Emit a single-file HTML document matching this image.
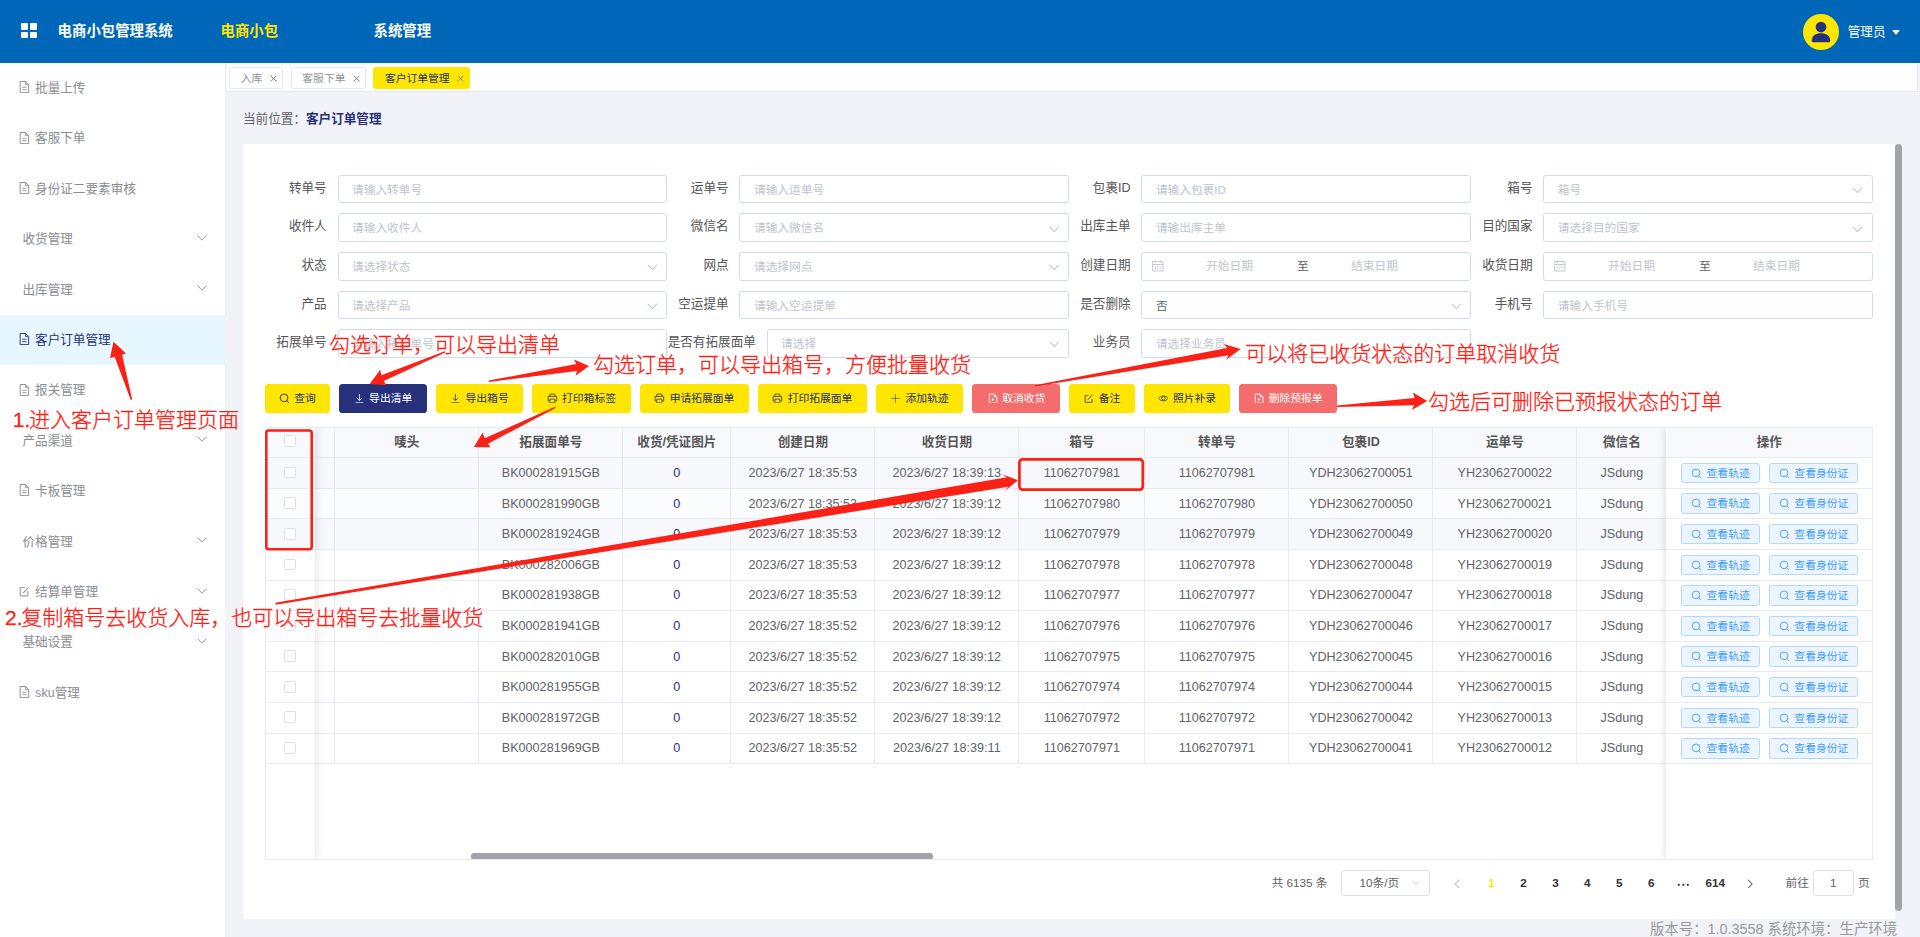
<!DOCTYPE html>
<html lang="zh-CN">
<head>
<meta charset="utf-8">
<title>电商小包管理系统</title>
<style>
*{box-sizing:border-box;margin:0;padding:0}
html,body{width:1920px;height:937px;overflow:hidden;background:#f2f3f8}
body{font-family:"Liberation Sans","Noto Sans CJK SC",sans-serif;position:relative}
#app{zoom:.9;position:absolute;left:0;top:0;width:2133.34px;height:1041.2px;overflow:hidden;background:#f2f3f8;color:#606266;font-size:14px}
/* header */
#hd{position:absolute;left:0;top:0;width:100%;height:70px;background:#0067b8;color:#fff}
#hd .grid{position:absolute;left:23px;top:26px;width:18px;height:17px}
#hd .grid i{position:absolute;width:8px;height:7px;background:#fff;border-radius:1px}
#hd .title{position:absolute;left:64px;top:0;line-height:70px;font-size:16px;font-weight:700;white-space:nowrap}
#hd .nav{position:absolute;left:192px;top:0;height:70px;display:flex}
#hd .nav div{width:170px;text-align:center;line-height:70px;font-size:16px;font-weight:700}
#hd .nav .on{color:#ffe600}
#hd .ava{position:absolute;left:2003px;top:15px;width:40px;height:40px;border-radius:50%;background:#ffe600;overflow:hidden}
#hd .user{position:absolute;left:2053px;top:0;line-height:72.4px;font-size:14px;white-space:nowrap}
#hd .caret{position:absolute;left:2102px;top:33px;width:0;height:0;border-left:5px solid transparent;border-right:5px solid transparent;border-top:6px solid #fff}
/* sidebar */
#sb{position:absolute;left:0;top:70px;width:250px;bottom:0;background:#fff}
#sb .mi{position:relative;height:56px;line-height:57px;padding-left:21px;font-size:14px;color:#8a8d93;white-space:nowrap}
#sb .mi.sub{padding-left:25px}
#sb .mi .di{display:inline-block;width:12px;height:13.5px;vertical-align:-1.5px;margin-right:6px}
#sb .mi .ar{position:absolute;right:19.8px;top:23px;width:11px;height:7px}
#sb .mi.on{background:#e6f7ff;color:#27307a}
/* tabs */
#tabs{position:absolute;left:250px;top:70px;right:2.5px;height:32px;border-right:1px solid #e4e7ed;border-left:1px solid #e4e7ed;background:#fff;border-bottom:1px solid #e4e7ed}
#tabs .tb{position:absolute;top:4.5px;height:24.5px;line-height:23.5px;border:1px solid #e4e7ed;border-radius:3px;font-size:12px;color:#909399;padding:0 0 0 12px;white-space:nowrap;background:#fff}
#tabs .tb .x{display:inline-block;margin-left:8px;width:8px;height:8px;color:#606266;vertical-align:-0.5px}
#tabs .tb.on{background:#ffe600;border-color:#ffe600;color:#27307a}
#tabs .tb.on .x{color:#7a7340}
/* content */
#bc{position:absolute;left:270px;top:122.3px;font-size:14px;line-height:22px;color:#606266;white-space:nowrap}
#bc b{color:#27307a;margin-left:0}
#card{position:absolute;left:270px;top:160px;width:1835.5px;height:861.5px;background:#fff}
#vs{position:absolute;left:2106px;top:160px;width:7.5px;height:852px;border-radius:4px;background:#a3a3aa}
#ft{position:absolute;right:25.5px;top:1022px;line-height:22px;font-size:16px;color:#999;white-space:nowrap}
/* form */
.fi{position:absolute;height:32px}
.fi label{position:absolute;right:100%;top:0;line-height:30px;padding-right:12px;font-size:14px;color:#555;white-space:nowrap}
.fi .in{position:absolute;left:0;top:0;width:100%;height:31px;border:1px solid #d3daee;border-radius:3px;background:#fff;font-size:13px;color:#c0c4cc;line-height:31px;padding-left:15px;white-space:nowrap;overflow:hidden}
.fi .in.v{color:#606266}
.fi .dn{position:absolute;right:10.5px;top:13.5px;width:12px;height:7.6px}
.fi .cal{position:absolute;left:12px;top:9px;width:13px;height:13px}
.fi .d1,.fi .d2,.fi .dz{position:absolute;top:0;line-height:31px;font-size:13px;color:#c0c4cc}
.fi .dz{color:#606266}
/* buttons */
.bt{position:absolute;top:266.5px;height:32px;border-radius:4px;background:#ffe600;color:#27307a;font-size:12px;line-height:32px;white-space:nowrap;text-align:center}
.bt.nv{background:#27307a;color:#fff}
.bt.rd{background:#f56c6c;color:#fff}
.bt svg{width:12px;height:12px;vertical-align:-1.5px;margin-right:5px}
/* table */
#tw{position:absolute;left:24.5px;top:314px;width:1787px;height:482px;border:1px solid #e8eaf3;overflow:hidden;background:#fff}
#tw table{position:absolute;left:0;top:0;border-collapse:separate;border-spacing:0;table-layout:fixed;width:1786px}
#tw th,#tw td{height:34px;border-right:1px solid #e8eaf3;border-bottom:1px solid #e8eaf3;text-align:center;font-size:14px;color:#606266;white-space:nowrap;overflow:hidden;padding:0}
#tw th{background:#f7f9fc;color:#555;font-weight:700;padding-bottom:4.8px}
#tw td.lnk{color:#27307a}
#tw tr.t1 td,#tw tr.t3 td{background:#f7f8fb}
#tw tr.t2 td{background:#fbfcfd}
#fixl{position:absolute;left:0;top:0;width:54.3px;height:480px;background:#fff;box-shadow:2px 0 8px rgba(0,0,0,.10)}
#fixr{position:absolute;right:0;top:0;width:229px;height:480px;background:#fff;box-shadow:-2px 0 8px rgba(0,0,0,.10)}
#fixl .fh,#fixr .fh{height:34px;background:#f7f9fc;border-bottom:1px solid #e8eaf3;text-align:center;line-height:33px;font-weight:700;color:#555;font-size:14px;position:relative}
.frow{height:34px;border-bottom:1px solid #e8eaf3;position:relative;white-space:nowrap}
#fixl .frow.t1,#fixl .frow.t3{background:#f7f8fb}
#fixl .frow.t2{background:#fbfcfd}
.cb{position:absolute;left:20.5px;top:9.5px;width:13px;height:13px;border:1px solid #dcdfe6;border-radius:2px;background:#fff}
.ob{position:absolute;top:5.2px;height:22.6px;border:1px solid #b3d8ff;background:#ecf5ff;color:#409eff;border-radius:3px;font-size:12px;line-height:20.6px;padding:0;text-align:center;white-space:nowrap}
.ob:nth-child(1){left:16px;width:88.6px}
.ob:nth-child(2){left:114px;width:99.6px}
.ob svg{width:12px;height:12px;vertical-align:-2px;margin-right:5px}
#hs{position:absolute;left:228px;top:473px;width:513px;height:7.5px;border-radius:3.5px;background:#a3a3aa}
/* pagination */
#pg{position:absolute;left:0;top:807.2px;width:100%;height:28px;font-size:13px;color:#606266;line-height:28px;white-space:nowrap}
#pg span{position:absolute;top:0}
#pg .num{font-weight:700;color:#303133;width:35.5px;text-align:center}
#pg .num.on{color:#ffe600}
#pg .sel{height:28px;width:99px;border:1px solid #dcdfe6;border-radius:3px;line-height:26px;padding-left:19px;color:#606266}
#pg .jmp{height:28px;width:46px;border:1px solid #dcdfe6;border-radius:3px;line-height:26px;text-align:center;color:#606266}
/* overlay */
#ov{position:absolute;left:0;top:0;width:1920px;height:937px;pointer-events:none}
#ov text{font-family:"Liberation Sans","Noto Sans CJK SC",sans-serif;font-size:21px;fill:#fc2116;font-weight:300;stroke:#fc2116;stroke-width:.28px}
#btns{position:absolute;left:0;top:266.8px}
#btns .bt{position:absolute;top:0}

#fixl .fh .cb{top:8.5px}

#tw td.c0,#tw th:first-child{border-right:none}

</style>
</head>
<body>
<div id="app">
  <div id="hd">
    <div class="grid"><i style="left:0;top:0"></i><i style="left:10.3px;top:0"></i><i style="left:0;top:9.7px"></i><i style="left:10.3px;top:9.7px"></i></div>
    <div class="title">电商小包管理系统</div>
    <div class="nav"><div class="on">电商小包</div><div>系统管理</div></div>
    <div class="ava"><svg viewBox="0 0 40 40" width="40" height="40"><circle cx="20" cy="14.5" r="6" fill="#27307a"/><path d="M11 31.3 Q9.6 31.3 9.7 29.5 C10 23.5 14 21.3 20 21.3 C26 21.3 30 23.5 30.3 29.5 Q30.4 31.3 29 31.3 Z" fill="#27307a"/></svg></div>
    <div class="user">管理员</div>
    <div class="caret"></div>
  </div>
  <div id="sb">
    <div class="mi"><svg class="di" viewBox="0 0 11 14"><path d="M0.6 0.6 H7 L10.4 4 V13.4 H0.6 Z" fill="none" stroke="currentColor" stroke-width="1.1" stroke-linejoin="round"/><path d="M6.8 0.8 V4.2 H10.2" fill="none" stroke="currentColor" stroke-width="1"/><path d="M3 7.2 H8 M3 10 H8" stroke="currentColor" stroke-width="1"/></svg>批量上传</div>
    <div class="mi"><svg class="di" viewBox="0 0 11 14"><path d="M0.6 0.6 H7 L10.4 4 V13.4 H0.6 Z" fill="none" stroke="currentColor" stroke-width="1.1" stroke-linejoin="round"/><path d="M6.8 0.8 V4.2 H10.2" fill="none" stroke="currentColor" stroke-width="1"/><path d="M3 7.2 H8 M3 10 H8" stroke="currentColor" stroke-width="1"/></svg>客服下单</div>
    <div class="mi"><svg class="di" viewBox="0 0 11 14"><path d="M0.6 0.6 H7 L10.4 4 V13.4 H0.6 Z" fill="none" stroke="currentColor" stroke-width="1.1" stroke-linejoin="round"/><path d="M6.8 0.8 V4.2 H10.2" fill="none" stroke="currentColor" stroke-width="1"/><path d="M3 7.2 H8 M3 10 H8" stroke="currentColor" stroke-width="1"/></svg>身份证二要素审核</div>
    <div class="mi sub">收货管理<svg class="ar" viewBox="0 0 11 7"><path d="M0.8 0.8 L5.5 5.7 L10.2 0.8" fill="none" stroke="#959bb0" stroke-width="1.1"/></svg></div>
    <div class="mi sub">出库管理<svg class="ar" viewBox="0 0 11 7"><path d="M0.8 0.8 L5.5 5.7 L10.2 0.8" fill="none" stroke="#959bb0" stroke-width="1.1"/></svg></div>
    <div class="mi on"><svg class="di" viewBox="0 0 11 14"><path d="M0.6 0.6 H7 L10.4 4 V13.4 H0.6 Z" fill="none" stroke="currentColor" stroke-width="1.1" stroke-linejoin="round"/><path d="M6.8 0.8 V4.2 H10.2" fill="none" stroke="currentColor" stroke-width="1"/><path d="M3 7.2 H8 M3 10 H8" stroke="currentColor" stroke-width="1"/></svg>客户订单管理</div>
    <div class="mi"><svg class="di" viewBox="0 0 11 14"><path d="M0.6 0.6 H7 L10.4 4 V13.4 H0.6 Z" fill="none" stroke="currentColor" stroke-width="1.1" stroke-linejoin="round"/><path d="M6.8 0.8 V4.2 H10.2" fill="none" stroke="currentColor" stroke-width="1"/><path d="M3 7.2 H8 M3 10 H8" stroke="currentColor" stroke-width="1"/></svg>报关管理</div>
    <div class="mi sub">产品渠道<svg class="ar" viewBox="0 0 11 7"><path d="M0.8 0.8 L5.5 5.7 L10.2 0.8" fill="none" stroke="#959bb0" stroke-width="1.1"/></svg></div>
    <div class="mi"><svg class="di" viewBox="0 0 11 14"><path d="M0.6 0.6 H7 L10.4 4 V13.4 H0.6 Z" fill="none" stroke="currentColor" stroke-width="1.1" stroke-linejoin="round"/><path d="M6.8 0.8 V4.2 H10.2" fill="none" stroke="currentColor" stroke-width="1"/><path d="M3 7.2 H8 M3 10 H8" stroke="currentColor" stroke-width="1"/></svg>卡板管理</div>
    <div class="mi sub">价格管理<svg class="ar" viewBox="0 0 11 7"><path d="M0.8 0.8 L5.5 5.7 L10.2 0.8" fill="none" stroke="#959bb0" stroke-width="1.1"/></svg></div>
    <div class="mi"><svg class="di" viewBox="0 0 11 14"><path d="M9.5 7 V12.6 H0.6 V3 H6" fill="none" stroke="currentColor" stroke-width="1.1"/><path d="M4 9.4 L10.2 2.6" stroke="currentColor" stroke-width="1.2"/></svg>结算单管理<svg class="ar" viewBox="0 0 11 7"><path d="M0.8 0.8 L5.5 5.7 L10.2 0.8" fill="none" stroke="#959bb0" stroke-width="1.1"/></svg></div>
    <div class="mi sub">基础设置<svg class="ar" viewBox="0 0 11 7"><path d="M0.8 0.8 L5.5 5.7 L10.2 0.8" fill="none" stroke="#959bb0" stroke-width="1.1"/></svg></div>
    <div class="mi"><svg class="di" viewBox="0 0 11 14"><path d="M0.6 0.6 H7 L10.4 4 V13.4 H0.6 Z" fill="none" stroke="currentColor" stroke-width="1.1" stroke-linejoin="round"/><path d="M6.8 0.8 V4.2 H10.2" fill="none" stroke="currentColor" stroke-width="1"/><path d="M3 7.2 H8 M3 10 H8" stroke="currentColor" stroke-width="1"/></svg>sku管理</div>
  </div>
  <div id="tabs">
    <div class="tb" style="left:3.3px;width:59.5px">入库<svg class="x" viewBox="0 0 8 8"><path d="M0.8 0.8 L7.2 7.2 M7.2 0.8 L0.8 7.2" stroke="currentColor" stroke-width="0.9" fill="none"/></svg></div>
    <div class="tb" style="left:71.7px;width:83.5px">客服下单<svg class="x" viewBox="0 0 8 8"><path d="M0.8 0.8 L7.2 7.2 M7.2 0.8 L0.8 7.2" stroke="currentColor" stroke-width="0.9" fill="none"/></svg></div>
    <div class="tb on" style="left:163.5px;width:108px">客户订单管理<svg class="x" viewBox="0 0 8 8"><path d="M0.8 0.8 L7.2 7.2 M7.2 0.8 L0.8 7.2" stroke="currentColor" stroke-width="0.9" fill="none"/></svg></div>
  </div>
  <div id="bc">当前位置：<b>客户订单管理</b></div>
  <div id="card">
    <!-- form row 1 -->
    <div class="fi" style="left:105px;top:34.2px;width:366px"><label>转单号</label><div class="in">请输入转单号</div></div>
    <div class="fi" style="left:551.6px;top:34.2px;width:366px"><label>运单号</label><div class="in">请输入运单号</div></div>
    <div class="fi" style="left:998.2px;top:34.2px;width:366px"><label>包裹ID</label><div class="in">请输入包裹ID</div></div>
    <div class="fi" style="left:1444.8px;top:34.2px;width:366px"><label>箱号</label><div class="in">箱号</div><svg class="dn" viewBox="0 0 11 7"><path d="M0.8 0.8 L5.5 5.7 L10.2 0.8" fill="none" stroke="#c0c4cc" stroke-width="1.1"/></svg></div>
    <!-- row 2 -->
    <div class="fi" style="left:105px;top:77.1px;width:366px"><label>收件人</label><div style="height:32px" class="in">请输入收件人</div></div>
    <div class="fi" style="left:551.6px;top:77.1px;width:366px"><label>微信名</label><div style="height:32px" class="in">请输入微信名</div><svg class="dn" viewBox="0 0 11 7"><path d="M0.8 0.8 L5.5 5.7 L10.2 0.8" fill="none" stroke="#c0c4cc" stroke-width="1.1"/></svg></div>
    <div class="fi" style="left:998.2px;top:77.1px;width:366px"><label>出库主单</label><div style="height:32px" class="in">请输出库主单</div></div>
    <div class="fi" style="left:1444.8px;top:77.1px;width:366px"><label>目的国家</label><div style="height:32px" class="in">请选择目的国家</div><svg class="dn" viewBox="0 0 11 7"><path d="M0.8 0.8 L5.5 5.7 L10.2 0.8" fill="none" stroke="#c0c4cc" stroke-width="1.1"/></svg></div>
    <!-- row 3 -->
    <div class="fi" style="left:105px;top:120px;width:366px"><label>状态</label><div style="height:32px" class="in">请选择状态</div><svg class="dn" viewBox="0 0 11 7"><path d="M0.8 0.8 L5.5 5.7 L10.2 0.8" fill="none" stroke="#c0c4cc" stroke-width="1.1"/></svg></div>
    <div class="fi" style="left:551.6px;top:120px;width:366px"><label>网点</label><div style="height:32px" class="in">请选择网点</div><svg class="dn" viewBox="0 0 11 7"><path d="M0.8 0.8 L5.5 5.7 L10.2 0.8" fill="none" stroke="#c0c4cc" stroke-width="1.1"/></svg></div>
    <div class="fi" style="left:998.2px;top:120px;width:366px"><label>创建日期</label><div style="height:32px" class="in"></div><svg class="cal" viewBox="0 0 13 13"><rect x="0.8" y="1.8" width="11.4" height="10.4" fill="none" stroke="#c0c4cc" stroke-width="1"/><path d="M0.8 5 H12.2 M3.6 0.5 V3 M9.4 0.5 V3 M3 7.5 H4.5 M5.8 7.5 H7.3 M8.6 7.5 H10 M3 9.8 H4.5 M5.8 9.8 H7.3 M8.6 9.8 H10" stroke="#c0c4cc" stroke-width="1" fill="none"/></svg><span class="d1" style="left:72px">开始日期</span><span class="dz" style="left:173px">至</span><span class="d2" style="left:233px">结束日期</span></div>
    <div class="fi" style="left:1444.8px;top:120px;width:366px"><label>收货日期</label><div style="height:32px" class="in"></div><svg class="cal" viewBox="0 0 13 13"><rect x="0.8" y="1.8" width="11.4" height="10.4" fill="none" stroke="#c0c4cc" stroke-width="1"/><path d="M0.8 5 H12.2 M3.6 0.5 V3 M9.4 0.5 V3 M3 7.5 H4.5 M5.8 7.5 H7.3 M8.6 7.5 H10 M3 9.8 H4.5 M5.8 9.8 H7.3 M8.6 9.8 H10" stroke="#c0c4cc" stroke-width="1" fill="none"/></svg><span class="d1" style="left:72px">开始日期</span><span class="dz" style="left:173px">至</span><span class="d2" style="left:233px">结束日期</span></div>
    <!-- row 4 -->
    <div class="fi" style="left:105px;top:162.9px;width:366px"><label>产品</label><div class="in">请选择产品</div><svg class="dn" viewBox="0 0 11 7"><path d="M0.8 0.8 L5.5 5.7 L10.2 0.8" fill="none" stroke="#c0c4cc" stroke-width="1.1"/></svg></div>
    <div class="fi" style="left:551.6px;top:162.9px;width:366px"><label>空运提单</label><div class="in">请输入空运提单</div></div>
    <div class="fi" style="left:998.2px;top:162.9px;width:366px"><label>是否删除</label><div class="in v">否</div><svg class="dn" viewBox="0 0 11 7"><path d="M0.8 0.8 L5.5 5.7 L10.2 0.8" fill="none" stroke="#c0c4cc" stroke-width="1.1"/></svg></div>
    <div class="fi" style="left:1444.8px;top:162.9px;width:366px"><label>手机号</label><div class="in">请输入手机号</div></div>
    <!-- row 5 -->
    <div class="fi" style="left:105px;top:205.8px;width:366px"><label>拓展单号</label><div style="height:32px" class="in">请输入拓展单号</div></div>
    <div class="fi" style="left:581.8px;top:205.8px;width:335.8px"><label>是否有拓展面单</label><div style="height:32px" class="in">请选择</div><svg class="dn" viewBox="0 0 11 7"><path d="M0.8 0.8 L5.5 5.7 L10.2 0.8" fill="none" stroke="#c0c4cc" stroke-width="1.1"/></svg></div>
    <div class="fi" style="left:998.2px;top:205.8px;width:366px"><label>业务员</label><div style="height:32px" class="in">请选择业务员</div></div>
    <!-- buttons -->
    <div id="btns">
      <span class="bt" style="left:24.4px;width:72.2px"><svg class="ic" viewBox="0 0 12 12"><circle cx="5.6" cy="5.4" r="4.3" fill="none" stroke="currentColor" stroke-width="1"/><path d="M8.7 8.6 L10.6 10.6" stroke="currentColor" stroke-width="1" fill="none" stroke-linecap="round"/></svg>查询</span>
      <span class="bt nv" style="left:106.7px;width:97.8px"><svg viewBox="0 0 12 12"><path d="M6 1 V8.2 M3 5.6 L6 8.4 L9 5.6 M1.5 10.8 H10.5" fill="none" stroke="currentColor" stroke-width="0.85"/></svg>导出清单</span>
      <span class="bt" style="left:214.4px;width:96.7px"><svg viewBox="0 0 12 12"><path d="M6 1 V8.2 M3 5.6 L6 8.4 L9 5.6 M1.5 10.8 H10.5" fill="none" stroke="currentColor" stroke-width="0.85"/></svg>导出箱号</span>
      <span class="bt" style="left:321.1px;width:109.7px"><svg viewBox="0 0 12 12"><path d="M3.2 3.8 V1.2 H8.8 V3.8 M3 8.8 H1.2 V3.8 H10.8 V8.8 H9 M3.2 6.8 H8.8 V11 H3.2 Z" fill="none" stroke="currentColor" stroke-width="0.85"/></svg>打印箱标签</span>
      <span class="bt" style="left:441.1px;width:120.8px"><svg viewBox="0 0 12 12"><path d="M3.2 3.8 V1.2 H8.8 V3.8 M3 8.8 H1.2 V3.8 H10.8 V8.8 H9 M3.2 6.8 H8.8 V11 H3.2 Z" fill="none" stroke="currentColor" stroke-width="0.85"/></svg>申请拓展面单</span>
      <span class="bt" style="left:572.2px;width:120.8px"><svg viewBox="0 0 12 12"><path d="M3.2 3.8 V1.2 H8.8 V3.8 M3 8.8 H1.2 V3.8 H10.8 V8.8 H9 M3.2 6.8 H8.8 V11 H3.2 Z" fill="none" stroke="currentColor" stroke-width="0.85"/></svg>打印拓展面单</span>
      <span class="bt" style="left:703.3px;width:96.3px"><svg viewBox="0 0 12 12"><path d="M6 1 V11 M1 6 H11" stroke="currentColor" stroke-width="0.8" fill="none" opacity=".75"/></svg>添加轨迹</span>
      <span class="bt rd" style="left:810px;width:98px"><svg viewBox="0 0 12 12"><path d="M2.6 1.2 H8 L11 4.2 V11.2 H2.6 Z" fill="none" stroke="currentColor" stroke-width="0.95"/><path d="M8 1.2 V4.2 H11" fill="none" stroke="currentColor" stroke-width="0.9"/><path d="M5.4 5.4 L8.2 7.3 L5.4 9.2 Z" fill="currentColor"/></svg>取消收货</span>
      <span class="bt" style="left:917.8px;width:73px"><svg viewBox="0 0 12 12"><path d="M10 6.6 V10.4 H2.4 V2.8 H6.2" fill="none" stroke="currentColor" stroke-width="0.85"/><path d="M5.4 7.4 L10.4 2" stroke="currentColor" stroke-width="0.95"/></svg>备注</span>
      <span class="bt" style="left:1001.1px;width:95.2px"><svg viewBox="0 0 12 12"><path d="M0.6 6 C3 2.4 9 2.4 11.4 6 C9 9.6 3 9.6 0.6 6 Z" fill="none" stroke="currentColor" stroke-width="0.8"/><circle cx="6" cy="6" r="2" fill="none" stroke="currentColor" stroke-width="0.8"/></svg>照片补录</span>
      <span class="bt rd" style="left:1106.7px;width:108.9px"><svg viewBox="0 0 12 12"><path d="M2.6 1.2 H8 L11 4.2 V11.2 H2.6 Z" fill="none" stroke="currentColor" stroke-width="0.95"/><path d="M8 1.2 V4.2 H11" fill="none" stroke="currentColor" stroke-width="0.9"/><path d="M5.4 5.4 L8.2 7.3 L5.4 9.2 Z" fill="currentColor"/></svg>删除预报单</span>
    </div>
    <!-- table -->
    <div id="tw">
      <table>
        <colgroup><col style="width:55px"><col style="width:22px"><col style="width:160px"><col style="width:160px"><col style="width:120px"><col style="width:160px"><col style="width:160px"><col style="width:140px"><col style="width:160px"><col style="width:160px"><col style="width:160px"><col style="width:100px"><col style="width:229px"></colgroup>
        <thead><tr><th></th><th></th><th>唛头</th><th>拓展面单号</th><th>收货/凭证图片</th><th>创建日期</th><th>收货日期</th><th>箱号</th><th>转单号</th><th>包裹ID</th><th>运单号</th><th>微信名</th><th>操作</th></tr></thead>
        <tbody>
<tr class="t1"><td class="c0"></td><td></td><td></td><td>BK000281915GB</td><td class="lnk">0</td><td>2023/6/27 18:35:53</td><td>2023/6/27 18:39:13</td><td>11062707981</td><td>11062707981</td><td>YDH23062700051</td><td>YH23062700022</td><td>JSdung</td><td class="op"></td></tr>
<tr class="t2"><td class="c0"></td><td></td><td></td><td>BK000281990GB</td><td class="lnk">0</td><td>2023/6/27 18:35:53</td><td>2023/6/27 18:39:12</td><td>11062707980</td><td>11062707980</td><td>YDH23062700050</td><td>YH23062700021</td><td>JSdung</td><td class="op"></td></tr>
<tr class="t3"><td class="c0"></td><td></td><td></td><td>BK000281924GB</td><td class="lnk">0</td><td>2023/6/27 18:35:53</td><td>2023/6/27 18:39:12</td><td>11062707979</td><td>11062707979</td><td>YDH23062700049</td><td>YH23062700020</td><td>JSdung</td><td class="op"></td></tr>
<tr><td class="c0"></td><td></td><td></td><td>BK000282006GB</td><td class="lnk">0</td><td>2023/6/27 18:35:53</td><td>2023/6/27 18:39:12</td><td>11062707978</td><td>11062707978</td><td>YDH23062700048</td><td>YH23062700019</td><td>JSdung</td><td class="op"></td></tr>
<tr><td class="c0"></td><td></td><td></td><td>BK000281938GB</td><td class="lnk">0</td><td>2023/6/27 18:35:53</td><td>2023/6/27 18:39:12</td><td>11062707977</td><td>11062707977</td><td>YDH23062700047</td><td>YH23062700018</td><td>JSdung</td><td class="op"></td></tr>
<tr><td class="c0"></td><td></td><td></td><td>BK000281941GB</td><td class="lnk">0</td><td>2023/6/27 18:35:52</td><td>2023/6/27 18:39:12</td><td>11062707976</td><td>11062707976</td><td>YDH23062700046</td><td>YH23062700017</td><td>JSdung</td><td class="op"></td></tr>
<tr><td class="c0"></td><td></td><td></td><td>BK000282010GB</td><td class="lnk">0</td><td>2023/6/27 18:35:52</td><td>2023/6/27 18:39:12</td><td>11062707975</td><td>11062707975</td><td>YDH23062700045</td><td>YH23062700016</td><td>JSdung</td><td class="op"></td></tr>
<tr><td class="c0"></td><td></td><td></td><td>BK000281955GB</td><td class="lnk">0</td><td>2023/6/27 18:35:52</td><td>2023/6/27 18:39:12</td><td>11062707974</td><td>11062707974</td><td>YDH23062700044</td><td>YH23062700015</td><td>JSdung</td><td class="op"></td></tr>
<tr><td class="c0"></td><td></td><td></td><td>BK000281972GB</td><td class="lnk">0</td><td>2023/6/27 18:35:52</td><td>2023/6/27 18:39:12</td><td>11062707972</td><td>11062707972</td><td>YDH23062700042</td><td>YH23062700013</td><td>JSdung</td><td class="op"></td></tr>
<tr><td class="c0"></td><td></td><td></td><td>BK000281969GB</td><td class="lnk">0</td><td>2023/6/27 18:35:52</td><td>2023/6/27 18:39:11</td><td>11062707971</td><td>11062707971</td><td>YDH23062700041</td><td>YH23062700012</td><td>JSdung</td><td class="op"></td></tr>
        </tbody>
      </table>
      <div id="fixl"><div class="fh"><span class="cb"></span></div>
<div class="frow t1"><span class="cb"></span></div>
<div class="frow t2"><span class="cb"></span></div>
<div class="frow t3"><span class="cb"></span></div>
<div class="frow"><span class="cb"></span></div>
<div class="frow"><span class="cb"></span></div>
<div class="frow"><span class="cb"></span></div>
<div class="frow"><span class="cb"></span></div>
<div class="frow"><span class="cb"></span></div>
<div class="frow"><span class="cb"></span></div>
<div class="frow"><span class="cb"></span></div>
      </div>
      <div id="fixr"><div class="fh">操作</div>
<div class="frow"><span class="ob"><svg class="ic" viewBox="0 0 12 12"><circle cx="5.6" cy="5.4" r="4.3" fill="none" stroke="currentColor" stroke-width="1"/><path d="M8.7 8.6 L10.6 10.6" stroke="currentColor" stroke-width="1" fill="none" stroke-linecap="round"/></svg><span>查看轨迹</span></span><span class="ob"><svg class="ic" viewBox="0 0 12 12"><circle cx="5.6" cy="5.4" r="4.3" fill="none" stroke="currentColor" stroke-width="1"/><path d="M8.7 8.6 L10.6 10.6" stroke="currentColor" stroke-width="1" fill="none" stroke-linecap="round"/></svg><span>查看身份证</span></span></div>
<div class="frow"><span class="ob"><svg class="ic" viewBox="0 0 12 12"><circle cx="5.6" cy="5.4" r="4.3" fill="none" stroke="currentColor" stroke-width="1"/><path d="M8.7 8.6 L10.6 10.6" stroke="currentColor" stroke-width="1" fill="none" stroke-linecap="round"/></svg><span>查看轨迹</span></span><span class="ob"><svg class="ic" viewBox="0 0 12 12"><circle cx="5.6" cy="5.4" r="4.3" fill="none" stroke="currentColor" stroke-width="1"/><path d="M8.7 8.6 L10.6 10.6" stroke="currentColor" stroke-width="1" fill="none" stroke-linecap="round"/></svg><span>查看身份证</span></span></div>
<div class="frow"><span class="ob"><svg class="ic" viewBox="0 0 12 12"><circle cx="5.6" cy="5.4" r="4.3" fill="none" stroke="currentColor" stroke-width="1"/><path d="M8.7 8.6 L10.6 10.6" stroke="currentColor" stroke-width="1" fill="none" stroke-linecap="round"/></svg><span>查看轨迹</span></span><span class="ob"><svg class="ic" viewBox="0 0 12 12"><circle cx="5.6" cy="5.4" r="4.3" fill="none" stroke="currentColor" stroke-width="1"/><path d="M8.7 8.6 L10.6 10.6" stroke="currentColor" stroke-width="1" fill="none" stroke-linecap="round"/></svg><span>查看身份证</span></span></div>
<div class="frow"><span class="ob"><svg class="ic" viewBox="0 0 12 12"><circle cx="5.6" cy="5.4" r="4.3" fill="none" stroke="currentColor" stroke-width="1"/><path d="M8.7 8.6 L10.6 10.6" stroke="currentColor" stroke-width="1" fill="none" stroke-linecap="round"/></svg><span>查看轨迹</span></span><span class="ob"><svg class="ic" viewBox="0 0 12 12"><circle cx="5.6" cy="5.4" r="4.3" fill="none" stroke="currentColor" stroke-width="1"/><path d="M8.7 8.6 L10.6 10.6" stroke="currentColor" stroke-width="1" fill="none" stroke-linecap="round"/></svg><span>查看身份证</span></span></div>
<div class="frow"><span class="ob"><svg class="ic" viewBox="0 0 12 12"><circle cx="5.6" cy="5.4" r="4.3" fill="none" stroke="currentColor" stroke-width="1"/><path d="M8.7 8.6 L10.6 10.6" stroke="currentColor" stroke-width="1" fill="none" stroke-linecap="round"/></svg><span>查看轨迹</span></span><span class="ob"><svg class="ic" viewBox="0 0 12 12"><circle cx="5.6" cy="5.4" r="4.3" fill="none" stroke="currentColor" stroke-width="1"/><path d="M8.7 8.6 L10.6 10.6" stroke="currentColor" stroke-width="1" fill="none" stroke-linecap="round"/></svg><span>查看身份证</span></span></div>
<div class="frow"><span class="ob"><svg class="ic" viewBox="0 0 12 12"><circle cx="5.6" cy="5.4" r="4.3" fill="none" stroke="currentColor" stroke-width="1"/><path d="M8.7 8.6 L10.6 10.6" stroke="currentColor" stroke-width="1" fill="none" stroke-linecap="round"/></svg><span>查看轨迹</span></span><span class="ob"><svg class="ic" viewBox="0 0 12 12"><circle cx="5.6" cy="5.4" r="4.3" fill="none" stroke="currentColor" stroke-width="1"/><path d="M8.7 8.6 L10.6 10.6" stroke="currentColor" stroke-width="1" fill="none" stroke-linecap="round"/></svg><span>查看身份证</span></span></div>
<div class="frow"><span class="ob"><svg class="ic" viewBox="0 0 12 12"><circle cx="5.6" cy="5.4" r="4.3" fill="none" stroke="currentColor" stroke-width="1"/><path d="M8.7 8.6 L10.6 10.6" stroke="currentColor" stroke-width="1" fill="none" stroke-linecap="round"/></svg><span>查看轨迹</span></span><span class="ob"><svg class="ic" viewBox="0 0 12 12"><circle cx="5.6" cy="5.4" r="4.3" fill="none" stroke="currentColor" stroke-width="1"/><path d="M8.7 8.6 L10.6 10.6" stroke="currentColor" stroke-width="1" fill="none" stroke-linecap="round"/></svg><span>查看身份证</span></span></div>
<div class="frow"><span class="ob"><svg class="ic" viewBox="0 0 12 12"><circle cx="5.6" cy="5.4" r="4.3" fill="none" stroke="currentColor" stroke-width="1"/><path d="M8.7 8.6 L10.6 10.6" stroke="currentColor" stroke-width="1" fill="none" stroke-linecap="round"/></svg><span>查看轨迹</span></span><span class="ob"><svg class="ic" viewBox="0 0 12 12"><circle cx="5.6" cy="5.4" r="4.3" fill="none" stroke="currentColor" stroke-width="1"/><path d="M8.7 8.6 L10.6 10.6" stroke="currentColor" stroke-width="1" fill="none" stroke-linecap="round"/></svg><span>查看身份证</span></span></div>
<div class="frow"><span class="ob"><svg class="ic" viewBox="0 0 12 12"><circle cx="5.6" cy="5.4" r="4.3" fill="none" stroke="currentColor" stroke-width="1"/><path d="M8.7 8.6 L10.6 10.6" stroke="currentColor" stroke-width="1" fill="none" stroke-linecap="round"/></svg><span>查看轨迹</span></span><span class="ob"><svg class="ic" viewBox="0 0 12 12"><circle cx="5.6" cy="5.4" r="4.3" fill="none" stroke="currentColor" stroke-width="1"/><path d="M8.7 8.6 L10.6 10.6" stroke="currentColor" stroke-width="1" fill="none" stroke-linecap="round"/></svg><span>查看身份证</span></span></div>
<div class="frow"><span class="ob"><svg class="ic" viewBox="0 0 12 12"><circle cx="5.6" cy="5.4" r="4.3" fill="none" stroke="currentColor" stroke-width="1"/><path d="M8.7 8.6 L10.6 10.6" stroke="currentColor" stroke-width="1" fill="none" stroke-linecap="round"/></svg><span>查看轨迹</span></span><span class="ob"><svg class="ic" viewBox="0 0 12 12"><circle cx="5.6" cy="5.4" r="4.3" fill="none" stroke="currentColor" stroke-width="1"/><path d="M8.7 8.6 L10.6 10.6" stroke="currentColor" stroke-width="1" fill="none" stroke-linecap="round"/></svg><span>查看身份证</span></span></div>
      </div>
      <div id="hs"></div>
    </div>
    <!-- pagination -->
    <div id="pg">
      <span style="left:1143px">共 6135 条</span>
      <span class="sel" style="left:1220.4px">10条/页</span>
      <svg style="position:absolute;left:1299px;top:11px;width:9px;height:6px" viewBox="0 0 11 7"><path d="M0.8 0.8 L5.5 5.7 L10.2 0.8" fill="none" stroke="#c0c4cc" stroke-width="1.1"/></svg>
      <svg style="position:absolute;left:1345px;top:9px;width:7px;height:11px" viewBox="0 0 7 11"><path d="M5.8 0.8 L1.2 5.5 L5.8 10.2" fill="none" stroke="#c0c4cc" stroke-width="1.3"/></svg>
      <span class="num on" style="left:1369.5px">1</span>
      <span class="num" style="left:1405px">2</span>
      <span class="num" style="left:1440.5px">3</span>
      <span class="num" style="left:1476px">4</span>
      <span class="num" style="left:1511.5px">5</span>
      <span class="num" style="left:1547px">6</span>
      <svg style="position:absolute;left:1593.5px;top:13.5px;width:14px;height:4px" viewBox="0 0 14 4"><circle cx="2" cy="2" r="1.25" fill="#303133"/><circle cx="7" cy="2" r="1.25" fill="#303133"/><circle cx="12" cy="2" r="1.25" fill="#303133"/></svg>
      <span class="num" style="left:1618px">614</span>
      <svg style="position:absolute;left:1671px;top:9px;width:7px;height:11px" viewBox="0 0 7 11"><path d="M1.2 0.8 L5.8 5.5 L1.2 10.2" fill="none" stroke="#303133" stroke-width="1.1"/></svg>
      <span style="left:1714px">前往</span>
      <span class="jmp" style="left:1744px">1</span>
      <span style="left:1794.5px">页</span>
    </div>
  </div>
  <div id="vs"></div>
  <div id="ft">版本号：1.0.3558 系统环境：生产环境</div>
</div>
<svg id="ov" viewBox="0 0 1920 937" width="1920" height="937">
<rect x="266.3" y="430.5" width="45.4" height="118.7" rx="2.5" fill="none" stroke="#fc2116" stroke-width="2.6"/>
<rect x="1019.4" y="459.4" width="123.4" height="30.2" rx="3" fill="none" stroke="#fc2116" stroke-width="2.7"/>
<polygon fill="#fc2116" points="130.8,399.9 114.6,356.8 110.0,358.0 113.5,341.7 126.0,353.5 122.1,354.7 132.2,399.5"/>
<polygon fill="#fc2116" points="444.7,351.3 381.3,375.3 380.2,369.8 369.7,384.0 386.4,385.2 383.8,381.0 445.3,352.5"/>
<polygon fill="#fc2116" points="488.6,380.6 576.2,364.0 574.0,359.4 589.0,366.0 575.5,375.8 577.0,371.0 488.9,381.9"/>
<polygon fill="#fc2116" points="554.9,406.7 484.8,438.3 482.5,432.8 473.9,446.9 490.3,447.2 488.0,443.8 555.5,407.9"/>
<polygon fill="#fc2116" points="1034.7,385.2 1227.0,348.0 1223.9,344.0 1240.6,349.0 1226.2,359.7 1228.6,355.3 1034.9,386.6"/>
<polygon fill="#fc2116" points="1337.0,405.6 1414.5,398.0 1413.0,392.5 1427.2,401.1 1411.8,410.0 1414.0,405.2 1337.0,407.0"/>
<polygon fill="#fc2116" points="275.3,602.8 1007.0,477.2 1001.6,473.9 1018.1,480.2 1004.3,491.2 1008.3,486.7 275.7,604.8"/>
<text x="12.8" y="426.5">1.<tspan dx="-1.2">进入客户订单管理页面</tspan></text>
<text x="5" y="624.5">2.<tspan dx="-1.2">复制箱号去收货入库，也可以导出箱号去批量收货</tspan></text>
<text x="329" y="351.5">勾选订单，可以导出清单</text>
<text x="593" y="371.6">勾选订单，可以导出箱号，方便批量收货</text>
<text x="1245.3" y="361">可以将已收货状态的订单取消收货</text>
<text x="1428" y="409">勾选后可删除已预报状态的订单</text>
</svg>
</body>
</html>
